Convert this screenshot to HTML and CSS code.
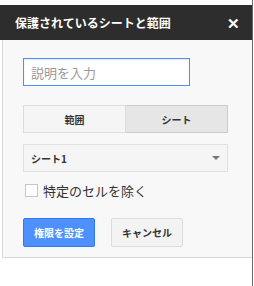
FILE: index.html
```html
<!DOCTYPE html>
<html>
<head>
    <meta charset="utf-8">
    <title>保護されているシートと範囲</title>
    <link rel="stylesheet" href="styles.css">
</head>
<body>
    <div class="page">
        <div class="header">
            <span class="title">保護されているシートと範囲</span>
            <span class="close">&#10005;</span>
        </div>
        <div class="panel">
            <input class="desc" placeholder="説明を入力">
            <div class="toggle">
                <div class="tab">範囲</div>
                <div class="tab active">シート</div>
            </div>
            <div class="select">
                <span>シート1</span>
                <span class="arrow"></span>
            </div>
            <label class="check">
                <span class="box"></span>
                特定のセルを除く
            </label>
            <div class="actions">
                <button class="btn primary">権限を設定</button>
                <button class="btn">キャンセル</button>
            </div>
        </div>
    </div>
</body>
</html>
```

FILE: styles.css
```css
body {
    margin: 0;
    background-color: #fff;
    font-family: "Noto Sans CJK JP", "Liberation Sans", sans-serif;
}
.page {
    width: 253px;
    height: 286px;
    padding-top: 5px;
    box-sizing: border-box;
    border-right: 1px solid #6b6b6b;
}
.header {
    width: 252px;
    height: 35px;
    background-color: #2d2d2d;
    color: #fff;
    display: flex;
    align-items: center;
    justify-content: space-between;
    padding: 0 12px 0 15px;
    box-sizing: border-box;
}
.title {
    font-size: 12px;
    font-weight: bold;
}
.close {
    font-size: 15px;
    font-weight: bold;
}
.panel {
    margin-left: 2px;
    width: 250px;
    background-color: #f8f8f8;
    border-left: 1px solid #d9d9d9;
    border-bottom: 1px solid #d9d9d9;
    padding: 18px 0 10px 20px;
    box-sizing: border-box;
}
.desc {
    display: block;
    width: 167px;
    height: 28px;
    box-sizing: border-box;
    border: 1px solid #4d90fe;
    box-shadow: inset 0 1px 2px rgba(0, 0, 0, 0.1);
    padding: 0 7px;
    font-family: inherit;
    font-size: 13px;
    outline: none;
}
.desc::placeholder {
    color: #999;
}
.toggle {
    display: flex;
    width: 205px;
    height: 28px;
    margin-top: 19px;
}
.tab {
    flex: 1;
    display: flex;
    align-items: center;
    justify-content: center;
    font-size: 10px;
    font-weight: bold;
    color: #333;
    background-color: #f5f5f5;
    border: 1px solid #dcdcdc;
}
.tab.active {
    background-color: #e6e6e6;
    border-left: none;
    border-color: #ccc;
}
.select {
    display: flex;
    align-items: center;
    justify-content: space-between;
    width: 205px;
    height: 28px;
    margin-top: 11px;
    padding: 0 7px;
    box-sizing: border-box;
    font-size: 10px;
    font-weight: bold;
    color: #333;
    background-color: #f5f5f5;
    border: 1px solid #e0e0e0;
}
.arrow {
    width: 0;
    height: 0;
    border-left: 4px solid transparent;
    border-right: 4px solid transparent;
    border-top: 4px solid #777;
}
.check {
    display: flex;
    align-items: center;
    margin-top: 11px;
    font-size: 13px;
    color: #333;
    height: 14px;
}
.box {
    width: 11px;
    height: 11px;
    border: 1px solid #c6c6c6;
    background-color: #fff;
    margin: 0 5px 0 2px;
}
.actions {
    display: flex;
    gap: 16px;
    margin-top: 21px;
}
.btn {
    height: 29px;
    width: 72px;
    font-family: inherit;
    font-size: 10px;
    font-weight: bold;
    color: #333;
    background-color: #f3f3f3;
    border: 1px solid #dcdcdc;
    border-radius: 2px;
    padding: 0;
}
.btn.primary {
    color: #fff;
    background-color: #4d90fe;
    border-color: #3079ed;
}
```
